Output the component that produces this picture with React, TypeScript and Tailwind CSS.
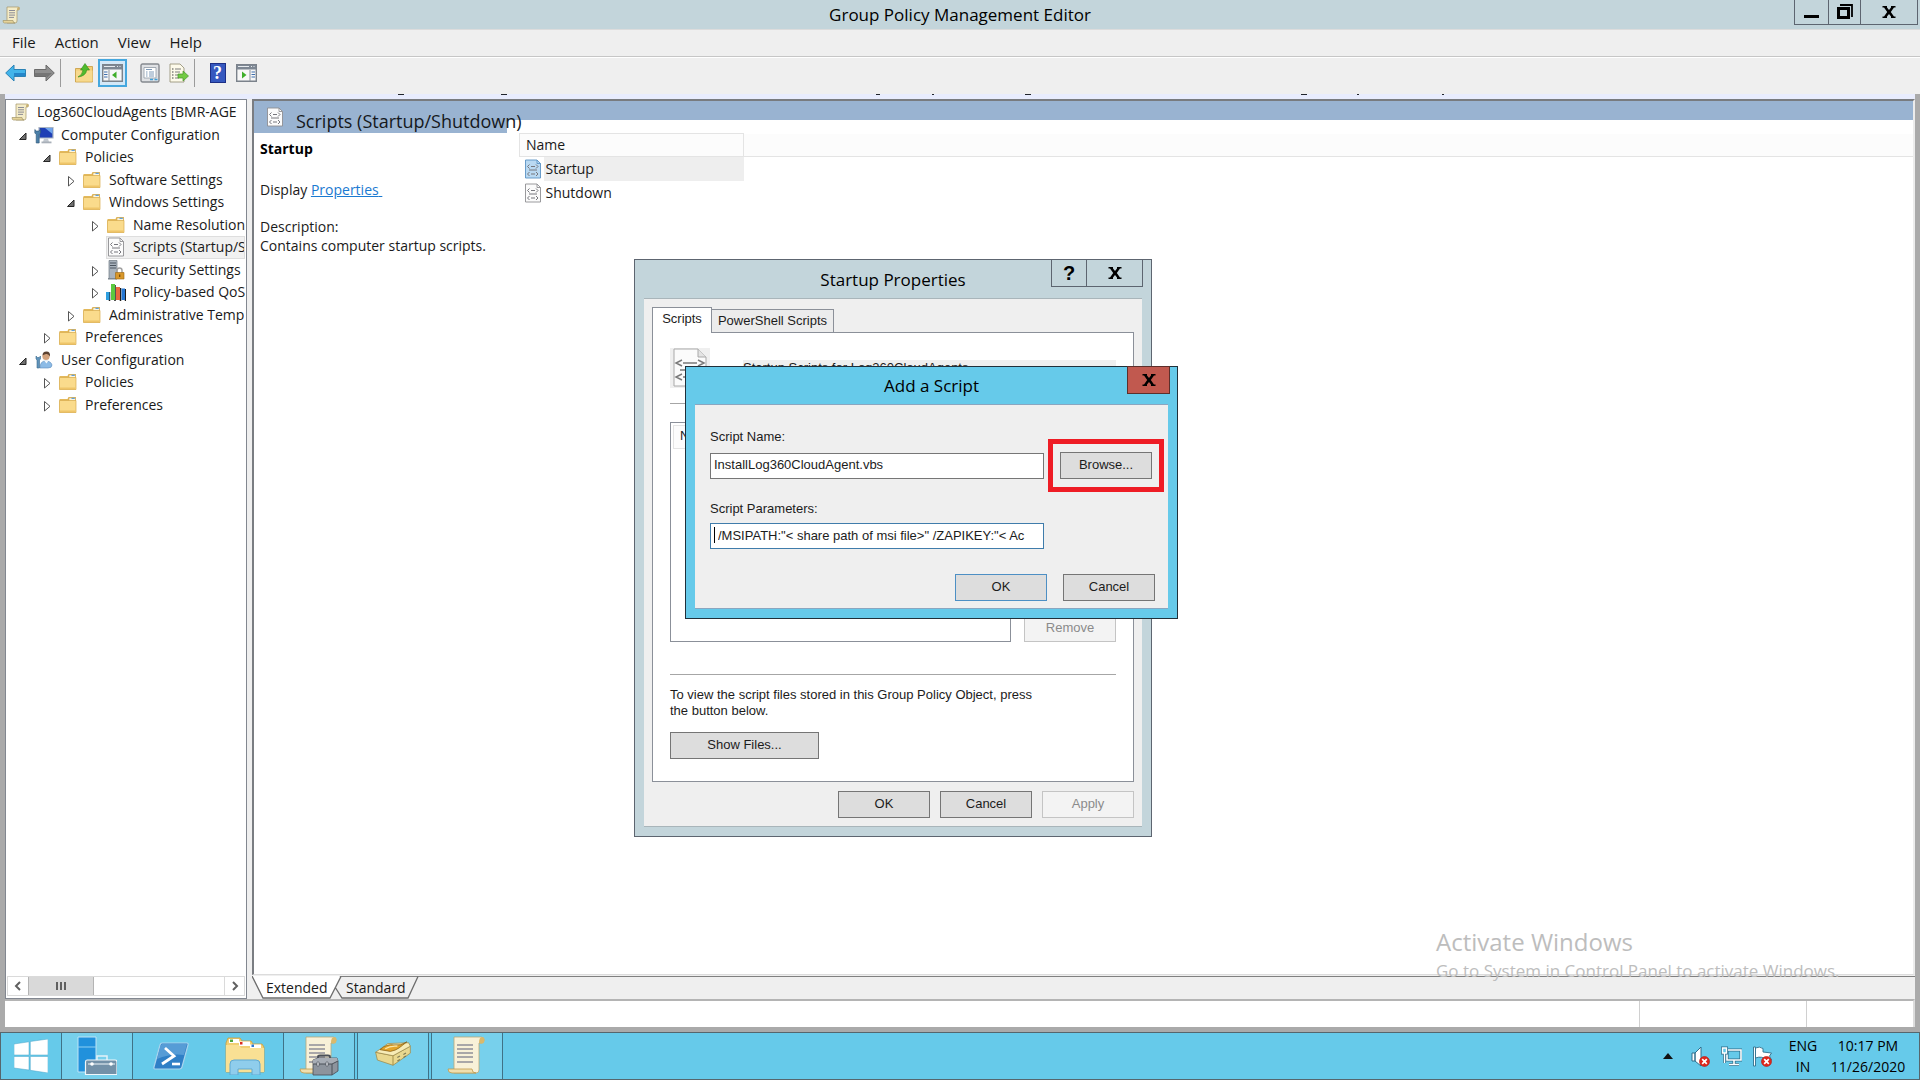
import type { ReactNode } from "react";

type IconName = "scroll" | "computer" | "folder" | "script" | "security" | "qos" | "user";

interface TreeNode {
  label: string;
  level: number;
  icon: IconName;
  state?: "open" | "closed";
  selected?: boolean;
}

const tree: TreeNode[] = [
  { label: "Log360CloudAgents [BMR-AGE", level: 0, icon: "scroll" },
  { label: "Computer Configuration", level: 1, icon: "computer", state: "open" },
  { label: "Policies", level: 2, icon: "folder", state: "open" },
  { label: "Software Settings", level: 3, icon: "folder", state: "closed" },
  { label: "Windows Settings", level: 3, icon: "folder", state: "open" },
  { label: "Name Resolution", level: 4, icon: "folder", state: "closed" },
  { label: "Scripts (Startup/S", level: 4, icon: "script", selected: true },
  { label: "Security Settings", level: 4, icon: "security", state: "closed" },
  { label: "Policy-based QoS", level: 4, icon: "qos", state: "closed" },
  { label: "Administrative Temp", level: 3, icon: "folder", state: "closed" },
  { label: "Preferences", level: 2, icon: "folder", state: "closed" },
  { label: "User Configuration", level: 1, icon: "user", state: "open" },
  { label: "Policies", level: 2, icon: "folder", state: "closed" },
  { label: "Preferences", level: 2, icon: "folder", state: "closed" },
];

const indent = ["pl-1", "pl-2", "pl-8", "pl-14", "pl-20"];

/* ---------- small icons ---------- */

function ScrollIcon({ className = "size-[18px]" }: { className?: string }) {
  return (
    <svg viewBox="0 0 18 18" className={className}>
      <path d="M5 1h11q1.500 0 1.500 1.500T16 4h-1v11q0 2-2 2H5z" fill="#f4ecc8" stroke="#a39668" strokeWidth=".7" />
      <path d="M15 4q0-3 1.500-3T17.500 3 16 4z" fill="#c9b070" />
      <path d="M1 14.500h10q0 2.500 2 2.500H2.500Q1 17 1 14.500z" fill="#e6d49a" stroke="#a39668" strokeWidth=".7" />
      <path d="M7 4.500h6M7 6.800h6M7 9.100h6M7 11.400h5" stroke="#8c8c96" strokeWidth="1" />
    </svg>
  );
}

function FolderIcon() {
  return (
    <svg viewBox="0 0 18 18" className="size-[18px]">
      <path d="M.5 3h8l1-2h7.500v15.500H.5z" fill="#e3b95c" />
      <path d="M10 1.800h6.500V5H10z" fill="#fdf6df" stroke="#c79b3c" strokeWidth=".5" />
      <path d="M12.500 2.300h3.300" stroke="#3f8fe0" strokeWidth="1" />
      <path d="M.5 4.500h16.500v12H.5z" fill="#fadb8c" stroke="#d9ac4e" strokeWidth=".7" />
      <path d="M1 14.500h15.500v1.600H1z" fill="#efc569" />
    </svg>
  );
}

function ScriptIcon({ tint = "#fbfbfb", line = "#8e8e92" }: { tint?: string; line?: string }) {
  return (
    <svg viewBox="0 0 18 20" className="h-5 w-[18px] shrink-0">
      <path d="M1.500 1h11.500l3.500 3.500V19h-15z" fill={tint} stroke={line} strokeWidth=".9" />
      <path d="M13 1v3.500h3.500" fill="none" stroke={line} strokeWidth=".9" />
      <path
        d="M5.500 5.500L3.500 7.500l2 2M12 5.500l2 2-2 2M7 7.500h4M5 11h8M5.500 13l-2 2 2 2M12 13l2 2-2 2M7 15h4"
        fill="none"
        stroke="#77777d"
        strokeWidth="1"
      />
    </svg>
  );
}

function ComputerIcon() {
  return (
    <svg viewBox="0 0 20 18" className="h-[18px] w-5">
      <path d="M5 1.500h14v10.500H5z" fill="#1f3fb5" stroke="#a9b4c2" strokeWidth="1.200" />
      <path d="M11 2h7.500v6z" fill="#6fa4ec" />
      <path d="M10 12.500h4l1 3.500h-6z" fill="#c3c9d1" />
      <path d="M7.500 15.500h10v1.800h-10z" fill="#a9b0b9" />
      <path d="M.8 3.500v3.500l1.400 1.400V17h3V8.400L6.600 7V3.500L5 5H2.400z" fill="#4b7fa8" stroke="#2e5673" strokeWidth=".6" />
    </svg>
  );
}

function SecurityIcon() {
  return (
    <svg viewBox="0 0 18 20" className="h-5 w-[18px]">
      <path d="M2 .5h8v18H2z" fill="#a9b3bd" stroke="#6f7983" strokeWidth=".7" />
      <path d="M3 3h6M3 5.500h6M3 8h6" stroke="#4a545e" strokeWidth="1" />
      <path d="M1 18h9v1.500H1z" fill="#7d8791" />
      <path d="M10 13v-2.500q0-2.500 2.500-2.500t2.500 2.500V13" fill="none" stroke="#a2a2a2" strokeWidth="1.500" />
      <path d="M8.500 12.500h8.500v6.500H8.500z" fill="#d8972a" stroke="#9b6510" strokeWidth=".6" />
      <path d="M12.700 14.500v2.500" stroke="#6e4508" strokeWidth="1.200" />
    </svg>
  );
}

function QosIcon() {
  return (
    <svg viewBox="0 0 20 18" className="h-[18px] w-5">
      <path d="M3.500 9v9M9 2v16M14.500 5v13M19.500 6v12" stroke="#1b1b1b" strokeWidth="1.500" />
      <path d="M0 9h3.500v8H0z" fill="#2f9fe0" />
      <path d="M5 1h4v16H5z" fill="#5cc93f" />
      <path d="M10 4h4v13h-4z" fill="#e8693f" />
      <path d="M15.500 5.500h3.500v11.500h-3.500z" fill="#2476d2" />
    </svg>
  );
}

function UserIcon() {
  return (
    <svg viewBox="0 0 18 18" className="size-[18px]">
      <path d="M5 17q0-7 5.500-7T17 14q0 3-4 3z" fill="#8dbbe6" stroke="#5a8cbc" strokeWidth=".6" />
      <path d="M9 9.500l2.500 3 2-3z" fill="#f4f7fa" />
      <circle cx="11" cy="5.500" r="3.600" fill="#d3a27c" />
      <path d="M7.500 4.500q0-4 4-4t3.500 5q-1.500-3-4-2.500T7.500 4.500z" fill="#5b4130" />
      <path d="M1 5v3l1 1v8h2.500V9l1-1V5L4 6.500H2.500z" fill="#5f93bb" stroke="#3d6c8f" strokeWidth=".6" />
    </svg>
  );
}

function TreeIcon({ name }: { name: IconName }) {
  switch (name) {
    case "scroll":
      return <ScrollIcon />;
    case "computer":
      return <ComputerIcon />;
    case "script":
      return <ScriptIcon />;
    case "security":
      return <SecurityIcon />;
    case "qos":
      return <QosIcon />;
    case "user":
      return <UserIcon />;
    default:
      return <FolderIcon />;
  }
}

function Expander({ state }: { state?: "open" | "closed" }) {
  return (
    <svg viewBox="0 0 16 16" className="size-4 shrink-0">
      {state === "open" && <path d="M12 6v6.500H5.500z" fill="#707070" stroke="#262626" strokeWidth="1" />}
      {state === "closed" && <path d="M6.500 4.500v9.500l5.500-4.700z" fill="#fff" stroke="#555" strokeWidth="1" />}
    </svg>
  );
}

function CloseGlyph() {
  return (
    <svg viewBox="0 0 14 12" className="h-3 w-3.5">
      <path d="M.5 0h4.500v1.500L7 4l2-2.500V0h4.500v1.500H12L8.800 6l3.200 4.500h1.500V12H9v-1.500L7 8l-2 2.500V12H.5v-1.500H2L5.200 6 2 1.500H.5z" fill="#000" />
    </svg>
  );
}

/* ---------- toolbar ---------- */

function ToolButton({ label, active, children }: { label: string; active?: boolean; children: ReactNode }) {
  return (
    <button
      aria-label={label}
      className={`flex h-7 w-[29px] items-center justify-center ${active ? "border-2 border-[#45a7de] bg-[#d3e8f8]" : ""}`}
    >
      {children}
    </button>
  );
}

function PaneIcon({ flip }: { flip?: boolean }) {
  return (
    <svg viewBox="0 0 21 18" className="h-[18px] w-[21px] shrink-0">
      <path d="M.7.700h19.600v16.600H.7z" fill="#f7f7f7" stroke="#7b828b" strokeWidth="1.400" />
      <path d="M1 1h19v4.500H1z" fill="#7d8793" />
      <path d="M2 2.500h11M15 2.500h1M17.500 2.500h1" stroke="#e7ebef" strokeWidth="1.200" />
      {flip ? (
        <>
          <path d="M14 6v11" stroke="#8b929b" />
          <path d="M15.500 8h3.500M15.500 10.500h3.500M15.500 13h3.500" stroke="#3f6fae" strokeWidth="1.200" />
          <path d="M6 7.500v7l4.500-3.500z" fill="#3fae2a" />
        </>
      ) : (
        <>
          <path d="M7 6v11" stroke="#8b929b" />
          <path d="M2 8h3.500M2 10.500h3.500M2 13h3.500" stroke="#3f6fae" strokeWidth="1.200" />
          <path d="M14.500 7.500v7L10 11z" fill="#3fae2a" />
        </>
      )}
    </svg>
  );
}

function Toolbar() {
  return (
    <div className="flex h-[37px] shrink-0 items-start border-t border-white bg-[#efefef] pt-px pl-px">
      <ToolButton label="Back">
        <svg viewBox="0 0 21 18" className="h-[18px] w-[21px]">
          <path d="M9 1v4.500h11.500v7H9V17L.700 9z" fill="#42b4ea" stroke="#2b82b5" strokeWidth="1" />
          <path d="M9 9h11v3H9z" fill="#2586c9" />
        </svg>
      </ToolButton>
      <ToolButton label="Forward">
        <svg viewBox="0 0 21 18" className="h-[18px] w-[21px]">
          <path d="M12 1v4.500H.5v7H12V17l8.300-8z" fill="#8f8f8f" stroke="#6b6b6b" strokeWidth="1" />
          <path d="M1 9h17l-5.500 5V12H1z" fill="#757575" />
        </svg>
      </ToolButton>
      <div className="ml-px h-7 w-px bg-[#9b9b9b]" />
      <div className="ml-2 flex">
        <ToolButton label="Up one level">
          <svg viewBox="0 0 18 20" className="h-5 w-[18px]">
            <path d="M.5 5.500h9l1-2h7v15.500H.5z" fill="#f3ce78" stroke="#c79a3d" strokeWidth=".8" />
            <path d="M1 7.500h16.500v11H1z" fill="#f7d98d" />
            <path d="M3 14q4.500-2 5-7H5.500L10 .5l4.500 6.500h-2.800Q11 13 3 14z" fill="#4fbb2e" stroke="#338a1b" strokeWidth=".6" />
          </svg>
        </ToolButton>
        <ToolButton label="Show or hide console tree" active>
          <PaneIcon />
        </ToolButton>
      </div>
      <div className="ml-2 flex">
        <ToolButton label="Properties">
          <svg viewBox="0 0 20 20" className="size-5">
            <rect x="1" y="1" width="18" height="18" rx="1.500" fill="#dfe1e4" stroke="#85898f" strokeWidth="1.400" />
            <path d="M4 4.500h12v10.500H4z" fill="#fff" stroke="#8f99a5" strokeWidth=".8" />
            <path d="M6 6.500h6M6 9h1.500M9 9h5M6 11h1.500M9 11h5M6 13h1.500M9 13h5" stroke="#6f8fb0" strokeWidth=".9" />
            <path d="M10 16.500h3M14.500 16.500h3" stroke="#3f9fd8" strokeWidth="1.600" />
          </svg>
        </ToolButton>
        <ToolButton label="Export list">
          <svg viewBox="0 0 20 20" className="size-5">
            <path d="M1 1h10l4 4v14H1z" fill="#fdfaea" stroke="#9a957d" strokeWidth=".9" />
            <path d="M3 6h1.500M3 9h1.500M3 12h1.500M3 15h1.500" stroke="#444" strokeWidth="1.200" />
            <path d="M6 6h6M6 9h5M6 12h4M6 15h4" stroke="#7d7d7d" strokeWidth="1" />
            <path d="M9 11h5V8l5.500 5-5.500 5v-3H9z" fill="#72ca43" stroke="#45962a" strokeWidth=".7" />
          </svg>
        </ToolButton>
      </div>
      <div className="ml-px h-7 w-px bg-[#9b9b9b]" />
      <div className="ml-2 flex">
        <ToolButton label="Help">
          <span className="flex h-5 w-4 items-center justify-center border border-[#1c2f86] bg-[#3558bf] font-['Liberation_Serif',serif] text-lg leading-4 font-bold text-white">
            ?
          </span>
        </ToolButton>
        <ToolButton label="Show or hide action pane">
          <PaneIcon flip />
        </ToolButton>
      </div>
    </div>
  );
}

/* ---------- panes ---------- */

function TreePane() {
  return (
    <nav className="flex w-[242px] shrink-0 flex-col border border-[#828790] bg-white">
      <ul role="tree" className="mt-px grid h-[315px] auto-rows-fr overflow-hidden pr-px">
        {tree.map((node, i) => (
          <li
            key={i}
            role="treeitem"
            aria-selected={!!node.selected}
            className={`flex min-w-0 items-center overflow-hidden whitespace-nowrap ${indent[node.level]}`}
          >
            {node.level > 0 && <Expander state={node.state} />}
            <span
              className={`flex h-full min-w-0 flex-1 items-center gap-[7px] ${node.level > 0 ? "ml-1" : ""} ${
                node.selected ? "bg-[#f1f1f1] outline -outline-offset-1 outline-[#dedede]" : ""
              }`}
            >
              <span className="flex w-5 shrink-0 justify-center">
                <TreeIcon name={node.icon} />
              </span>
              <span className="min-w-0 overflow-hidden">{node.label}</span>
            </span>
          </li>
        ))}
      </ul>
      <div className="mx-px mt-auto mb-0.5 flex h-5 border border-[#dadada] bg-white">
        <button aria-label="Scroll left" className="flex w-5 items-center justify-center">
          <svg viewBox="0 0 8 10" className="h-2.5 w-2">
            <path d="M6 1L2 5l4 4" fill="none" stroke="#606060" strokeWidth="2" />
          </svg>
        </button>
        <div className="flex w-[66px] items-center justify-center gap-0.5 border-x border-[#b4b4b4] bg-[#d9d9d9]">
          <i className="h-2 w-0.5 bg-[#606060]" />
          <i className="h-2 w-0.5 bg-[#606060]" />
          <i className="h-2 w-0.5 bg-[#606060]" />
        </div>
        <div className="flex-1" />
        <button aria-label="Scroll right" className="flex w-5 items-center justify-center border-l border-[#dadada]">
          <svg viewBox="0 0 8 10" className="h-2.5 w-2">
            <path d="M2 1l4 4-4 4" fill="none" stroke="#606060" strokeWidth="2" />
          </svg>
        </button>
      </div>
    </nav>
  );
}

function DetailPane() {
  return (
    <section className="flex min-w-0 flex-1 flex-col">
      <div className="flex flex-1 border-t-2 border-r-2 border-b border-l-2 border-t-[#787b7f] border-r-[#ececec] border-b-[#dcdcdc] border-l-[#7a7d82] bg-white">
        <aside className="w-[253px] shrink-0">
          <h2 className="relative z-10 flex h-8 items-center gap-3 bg-[#99b3d1] pl-3 text-lg whitespace-nowrap text-[#15181c]">
            <ScriptIcon />
            <span className="pt-2">Scripts (Startup/Shutdown)</span>
          </h2>
          <div className="pt-1.5 pl-1.5 leading-[19px] whitespace-nowrap">
            <p className="font-bold text-black">Startup</p>
            <p className="mt-[22px]">
              Display{" "}
              <a href="#properties" className="text-[#1b7ad1] underline">
                Properties{"\u00a0"}
              </a>
            </p>
            <p className="mt-[18px]">Description:</p>
            <p>Contains computer startup scripts.</p>
          </div>
        </aside>
        <div className="min-w-0 flex-1">
          <div className="h-[19px] bg-[#99b3d1]" />
          <table className="mt-[13px] ml-3 w-[calc(100%-12px)] table-fixed border-collapse text-left">
            <thead>
              <tr className="h-[23px] border-b border-[#e4e4e4] bg-[#fcfcfc]">
                <th className="w-[224px] border border-[#e4e4e4] pl-1.5 font-normal">Name</th>
                <th aria-label="Empty" />
              </tr>
            </thead>
            <tbody>
              <tr className="h-6">
                <td className="p-0">
                  <div className="flex items-center pl-1">
                    <ScriptIcon tint="#b9d9f2" line="#5b93c4" />
                    <span className="ml-0.5 h-6 flex-1 bg-[#eeeeee] pl-0.5 leading-6">Startup</span>
                  </div>
                </td>
                <td />
              </tr>
              <tr className="h-6">
                <td className="p-0">
                  <div className="flex items-center pl-1">
                    <ScriptIcon />
                    <span className="ml-0.5 h-6 flex-1 pl-0.5 leading-6">Shutdown</span>
                  </div>
                </td>
                <td />
              </tr>
            </tbody>
          </table>
        </div>
      </div>
      <div className="relative mt-px flex h-[23px] items-center border-t border-[#808080] bg-[#efefef] pl-3.5">
        <svg viewBox="0 0 168 23" className="absolute -top-px left-0 h-[23px] w-[168px]">
          <path d="M0 0h88L78 22H11z" fill="#fff" />
          <path d="M0 0l11 22h67L89 .5M83 11l7 11h66l10-21.500" fill="none" stroke="#6d6d6d" strokeWidth="1.300" />
        </svg>
        <button className="relative w-[66px] text-left">Extended</button>
        <button className="relative ml-3.5 w-[66px] text-left">Standard</button>
      </div>
    </section>
  );
}

/* ---------- dialogs ---------- */

function DialogButton({
  children,
  wide,
  focus,
  disabled,
}: {
  children: ReactNode;
  wide?: boolean;
  focus?: boolean;
  disabled?: boolean;
}) {
  const tone = disabled
    ? "border-[#c4c4c4] bg-[#f3f3f3] text-[#8b8b8b]"
    : focus
      ? "border-[#4d8fc4] bg-[#dddddd]"
      : "border-[#757575] bg-[#dddddd]";
  return (
    <button
      type="button"
      disabled={disabled}
      className={`h-[27px] shrink-0 border ${wide ? "w-[149px]" : "w-[92px]"} ${tone}`}
    >
      {children}
    </button>
  );
}

function StartupDialog() {
  return (
    <div
      role="dialog"
      aria-label="Startup Properties"
      className="absolute top-[259px] left-[634px] flex h-[578px] w-[518px] flex-col border border-[#5d6570] bg-[#c3d5db] px-[9px] pb-[9px] font-['Liberation_Sans',sans-serif] text-[13px] text-[#1c1c1c]"
    >
      <header className="relative flex h-[38px] shrink-0 items-center justify-center pt-0.5 font-['Open_Sans',sans-serif] text-[17px] text-black">
        Startup Properties
        <div className="absolute top-[-1px] right-[-1px] flex h-7 border border-[#5d6570]">
          <button aria-label="Help" className="w-[34px] font-['Liberation_Sans',sans-serif] text-xl leading-6 font-bold">
            ?
          </button>
          <button aria-label="Close" className="flex w-[56px] items-center justify-center border-l border-[#5d6570]">
            <CloseGlyph />
          </button>
        </div>
      </header>
      <div className="flex flex-1 flex-col border-t border-b border-[#a9b5ba] bg-[#efefef] px-2 pt-2">
        <div role="tablist" className="relative z-10 flex items-end">
          <button role="tab" aria-selected="true" className="-mb-px h-[26px] w-[60px] border border-b-0 border-[#8b9099] bg-white pb-0.5">
            Scripts
          </button>
          <button role="tab" aria-selected="false" className="h-[23px] w-[122px] border border-b-0 border-l-0 border-[#8b9099] bg-[#ececec]">
            PowerShell Scripts
          </button>
        </div>
        <div className="flex h-[450px] shrink-0 flex-col border border-[#8b9099] bg-white px-[17px] pt-[15px]">
          <div className="flex h-10 gap-[33px]">
            <svg viewBox="0 0 40 40" className="size-10 bg-[#efefef]">
              <path d="M4 1h24l8 8v29H4z" fill="#fbfbfb" stroke="#a9a9a9" />
              <path d="M28 1v8h8" fill="#e3e3e3" stroke="#a9a9a9" />
              <path d="M12 12l-6 3 6 3M28 12l6 3-6 3M13 15h14M10 22h18M12 26l-6 3 6 3M13 29h14" fill="none" stroke="#7a7a7a" strokeWidth="1.500" />
            </svg>
            <p className="mt-3 h-4 flex-1 bg-[#efefef] leading-4">Startup Scripts for Log360CloudAgents</p>
          </div>
          <hr className="mt-[15px] border-[#a6a6a6]" />
          <div className="mt-[18px] flex items-end justify-between">
            <div className="h-[220px] w-[341px] border border-[#8b9099] bg-white p-0.5">
              <div className="h-6 border border-[#e4e4e4] bg-[#fcfcfc] pl-1.5 leading-5">Name</div>
            </div>
            <DialogButton disabled>Remove</DialogButton>
          </div>
          <hr className="mt-8 border-[#a6a6a6]" />
          <p className="mt-3 mb-[13px] w-[380px] leading-4">
            To view the script files stored in this Group Policy Object, press
            <br />
            the button below.
          </p>
          <DialogButton wide>Show Files...</DialogButton>
        </div>
        <div className="mt-[9px] flex justify-end gap-2.5">
          <DialogButton>OK</DialogButton>
          <DialogButton>Cancel</DialogButton>
          <DialogButton disabled>Apply</DialogButton>
        </div>
      </div>
    </div>
  );
}

function AddScriptDialog() {
  return (
    <div
      role="dialog"
      aria-label="Add a Script"
      className="absolute top-[366px] left-[685px] flex h-[253px] w-[493px] flex-col border border-[#20303a] bg-[#66caea] px-[9px] pb-[9px] font-['Liberation_Sans',sans-serif] text-[13px] text-[#1c1c1c]"
    >
      <header className="relative flex h-[37px] shrink-0 items-center justify-center pt-0.5 font-['Open_Sans',sans-serif] text-[17px] text-black">
        Add a Script
        <button
          aria-label="Close"
          className="absolute top-[-1px] right-[-2px] flex h-7 w-[43px] items-center justify-center border border-[#5c2f2b] bg-[#c1594f]"
        >
          <CloseGlyph />
        </button>
      </header>
      <form className="flex flex-1 flex-col border-t border-b border-[#8aa6c0] bg-[#efefef] pt-6 pl-[15px]">
        <label htmlFor="script-name" className="leading-4">
          Script Name:
        </label>
        <div className="mt-1.5 flex items-center">
          <input
            id="script-name"
            defaultValue="InstallLog360CloudAgent.vbs"
            className="h-[26px] w-[334px] shrink-0 border border-[#767676] bg-white px-[3px] pb-0.5"
          />
          {/* highlighted step */}
          <div className="-my-3 ml-1 border-[5px] border-[#ee1c25] px-[7px] py-2">
            <DialogButton>Browse...</DialogButton>
          </div>
        </div>
        <label htmlFor="script-params" className="mt-[21px] leading-4">
          Script Parameters:
        </label>
        <div className="relative mt-1.5 w-[334px]">
          <input
            id="script-params"
            defaultValue={'/MSIPATH:"< share path of msi file>" /ZAPIKEY:"< Ac'}
            className="h-[26px] w-full border border-[#3f7cab] bg-white pr-[3px] pb-0.5 pl-[7px]"
          />
          <i className="absolute top-1 left-1 h-4 w-px bg-black" />
        </div>
        <div className="mt-[25px] flex justify-end gap-4 pr-[13px]">
          <DialogButton focus>OK</DialogButton>
          <DialogButton>Cancel</DialogButton>
        </div>
      </form>
    </div>
  );
}

/* ---------- taskbar ---------- */

function TaskButton({ label, open, children }: { label: string; open?: boolean; children: ReactNode }) {
  return (
    <button
      aria-label={label}
      className={`mr-0.5 flex h-full w-[72px] items-center justify-center ${open ? "border-x border-[#3f7287] bg-[#77d0ec]" : ""}`}
    >
      {children}
    </button>
  );
}

function BigScroll({ toolbox }: { toolbox?: boolean }) {
  return (
    <svg viewBox="0 0 40 40" className="size-10">
      <path d="M7 1h27q3 0 3 3t-3 3h-2v27q0 3-3 3H7z" fill="#f8f1d8" stroke="#b7a878" strokeWidth=".8" />
      <path d="M32 7q0-6 3-6t2.500 4-5.500 2z" fill="#d9b96c" />
      <path d="M1 33h24q0 4 4 4H5q-4 0-4-4z" fill="#f0dfae" stroke="#c09a4c" strokeWidth=".8" />
      <path d="M10 9h16M10 13h16M10 17h16M10 21h16M10 26h16" stroke="#8f8f98" strokeWidth="1.300" />
      {toolbox && (
        <g>
          <path d="M19 23v-2q0-1.500 2-1.500h8q2 0 2 1.500v2" fill="none" stroke="#4b5058" strokeWidth="1.800" />
          <path d="M14 24l5-2h19l1 3v10l-6 4H14z" fill="#8d949d" stroke="#484d55" strokeWidth=".8" />
          <path d="M14 24l5-2h19l1 3-6 3H14z" fill="#a7adb5" />
          <path d="M14 28h19l6-3M33 28v11" fill="none" stroke="#4b5058" />
          <path d="M18 26h2v4h-2zM27 26h2v4h-2z" fill="#dde1e6" stroke="#3b3f45" strokeWidth=".5" />
        </g>
      )}
    </svg>
  );
}

function ErrorBadge({ x }: { x: number }) {
  return (
    <g>
      <circle cx={x} cy="15.500" r="5" fill="#e0271c" stroke="#b5170f" strokeWidth=".6" />
      <path d={`M${x - 2.3} 13.200l4.600 4.600M${x + 2.3} 13.200l-4.600 4.600`} stroke="#fff" strokeWidth="1.700" />
    </g>
  );
}

function Taskbar() {
  return (
    <footer className="flex h-12 shrink-0 items-center border border-[#56666d] bg-[#66caea] font-['Open_Sans',sans-serif]">
      <button aria-label="Start" className="flex h-full w-[60px] items-center justify-center">
        <svg viewBox="0 0 34 34" className="size-[34px]">
          <path d="M0 5l15-2.200V16H0zM16.300 2.500L34 0v16H16.300zM0 17.500h15V31L0 29zM16.300 17.500H34V34l-17.700-2.700z" fill="#fff" stroke="#4ba5c8" strokeWidth=".5" />
        </svg>
      </button>
      <TaskButton label="Server Manager" open>
        <svg viewBox="0 0 40 40" className="size-10">
          <path d="M1 1h18v35H1z" fill="#2191dc" stroke="#bfe4f6" strokeWidth="1" />
          <path d="M1 11h18" stroke="#8fd0f2" strokeWidth="1" />
          <path d="M20 24v-4h10v4" fill="none" stroke="#e4f1f8" strokeWidth="1.500" />
          <path d="M10 24h28q2 0 2 2v12.500H8.500V26q0-2 1.500-2z" fill="#7391a8" stroke="#f1f7fa" strokeWidth="1.200" />
          <path d="M11 28h27" stroke="#f1f7fa" />
          <circle cx="15" cy="28" r="1.800" fill="#fff" />
          <circle cx="34" cy="28" r="1.800" fill="#fff" />
        </svg>
      </TaskButton>
      <TaskButton label="Windows PowerShell">
        <svg viewBox="0 0 36 28" className="h-7 w-9">
          <path d="M9 1h25q1.500 0 1 2l-6 22q-.5 2-2.500 2H2q-1.500 0-1-2L7 3q.5-2 2-2z" fill="#2f7fc6" stroke="#a9d4ee" strokeWidth="1.200" />
          <path d="M9 2h25l-3 11Q18 11 4 17L7.500 3.500z" fill="#66a8dd" opacity=".7" />
          <path d="M12 6l9 8-12 8" fill="none" stroke="#fff" strokeWidth="2.800" />
          <path d="M19 22h8" stroke="#fff" strokeWidth="2.600" />
        </svg>
      </TaskButton>
      <TaskButton label="File Explorer">
        <svg viewBox="0 0 40 38" className="h-[38px] w-10">
          <path d="M1 6l2-5h12l2 3h9l2 3h9l2 3v25H1z" fill="#f1cf72" stroke="#c99d3f" strokeWidth=".8" />
          <path d="M4 2h10v4H4zM14 4.500h11V9H14zM25 7.500h11V12H25z" fill="#fff" />
          <path d="M5 2.500h3V5H5z" fill="#4fa63a" />
          <path d="M15 5h2.500v2.500H15z" fill="#dc2c22" />
          <path d="M26.500 7.500H29V10h-2.500z" fill="#2c78d0" />
          <path d="M1 8h13l2 3h23v24H1z" fill="#f9e094" />
          <path d="M5 38V27q0-4 4-4h22q4 0 4 4v11h-8v-6H13v6z" fill="#8fcdec" stroke="#5fa9d3" strokeWidth="1" />
        </svg>
      </TaskButton>
      <TaskButton label="Group Policy Management" open>
        <BigScroll toolbox />
      </TaskButton>
      <TaskButton label="Run" open>
        <svg viewBox="0 0 42 30" className="-mt-1 h-[26px] w-10">
          <path d="M1 13l20 4 20-11v8L21 28 3 22z" fill="#e9d88f" stroke="#9b8440" strokeWidth=".8" />
          <path d="M21 17v11" stroke="#9b8440" />
          <path d="M1 13L15 3l24-1 2 4-20 11z" fill="#f7ecb7" stroke="#9b8440" strokeWidth=".8" />
          <path d="M6 10q8-7 16-5.500T37 1q-5 4-9 7t-10 4z" fill="#e3a52b" stroke="#7c560f" strokeWidth=".8" />
          <path d="M12 9q6-4 14-3" fill="none" stroke="#fbe6a6" strokeWidth="1.400" />
          <path d="M26 19l3-1.700M33 15.500l3-1.700M26 23l3-1.700M33 19l3-1.700" stroke="#7e7a55" strokeWidth="1.300" />
        </svg>
      </TaskButton>
      <TaskButton label="Group Policy Management Editor" open>
        <BigScroll />
      </TaskButton>

      <div className="ml-auto flex items-center pr-3 text-black">
        <button aria-label="Show hidden icons" className="mr-[17px]">
          <svg viewBox="0 0 10 6" className="h-1.5 w-2.5">
            <path d="M5 0l5 6H0z" fill="#111" />
          </svg>
        </button>
        <div className="mr-3 flex gap-2.5">
          <svg viewBox="0 0 21 21" className="size-[21px]">
            <path d="M2 7h3v8H2zM5 7l6-6v19l-6-5z" fill="#fff" stroke="#2f6f8c" strokeWidth="1" />
            <ErrorBadge x={14.5} />
          </svg>
          <svg viewBox="0 0 21 21" className="size-[21px]">
            <path d="M6 4h14v10H6zM13 14v4M8 18.500h10" fill="none" stroke="#2f6f8c" strokeWidth="3.200" />
            <path d="M6 4h14v10H6zM13 14v4M8 18.500h10" fill="none" stroke="#fff" strokeWidth="1.600" />
            <path d="M1.500 2h4v5h-4zM3.500 7v10" fill="#66caea" stroke="#2f6f8c" strokeWidth="3" />
            <path d="M1.500 2h4v5h-4zM3.500 7v10" fill="#66caea" stroke="#fff" strokeWidth="1.400" />
          </svg>
          <svg viewBox="0 0 21 21" className="size-[21px]">
            <path d="M1.500 1h2v19h-2z" fill="#fff" stroke="#2f6f8c" strokeWidth=".9" />
            <path d="M3.500 2q4-2 7.500.5V6l8.500 1-2 3 2 4h-5Q10 9.500 3.500 12z" fill="#fff" stroke="#2f6f8c" strokeWidth=".9" />
            <ErrorBadge x={14.5} />
          </svg>
        </div>
        <div className="mr-2 w-9 text-center text-sm leading-[21px]">
          ENG
          <br />
          IN
        </div>
        <div className="w-[78px] text-center text-sm leading-[21px] whitespace-nowrap">
          10:17 PM
          <br />
          11/26/2020
        </div>
      </div>
    </footer>
  );
}

export default function App() {
  return (
    <div className="h-screen w-full bg-white pr-[5px] pb-[7px]">
      <div className="relative flex h-full flex-col overflow-hidden font-['Open_Sans',sans-serif] text-sm text-[#1a1a1a]">
        <header className="relative flex h-[29px] shrink-0 items-center justify-center bg-[#c3d5db] pt-0.5 text-[17px] text-black">
          <div className="absolute top-1.5 left-0.5">
            <ScrollIcon />
          </div>
          <h1>Group Policy Management Editor</h1>
          <div className="absolute -top-px right-0.5 flex h-[26px] border border-[#5d6570]">
            <button aria-label="Minimize" className="flex w-[33px] items-center justify-center pt-2">
              <i className="h-[3px] w-[15px] bg-black" />
            </button>
            <button aria-label="Restore" className="flex w-8 items-center justify-center border-l border-[#5d6570]">
              <svg viewBox="0 0 16 16" className="size-4">
                <path d="M1.500 4.500h10v9h-10z" fill="none" stroke="#000" strokeWidth="3" />
                <path d="M3 1h12v12" fill="none" stroke="#000" strokeWidth="1.800" />
              </svg>
            </button>
            <button aria-label="Close" className="flex w-[57px] items-center justify-center border-l border-[#5d6570]">
              <CloseGlyph />
            </button>
          </div>
        </header>

        <nav className="flex h-7 shrink-0 items-center gap-[19px] border-t border-b border-t-[#dcdcdc] border-b-[#c6c6c6] bg-[#efefef] pl-3 text-[15px]">
          <button>File</button>
          <button>Action</button>
          <button>View</button>
          <button>Help</button>
        </nav>
        <Toolbar />

        <div className="flex min-h-0 flex-1 flex-col bg-[#aaaaaa] px-[5px] pb-[5px]">
          <div className="relative h-[5px] shrink-0 bg-[#e8ecfd]">
            <svg viewBox="0 0 1100 2" className="absolute top-0 left-[390px] h-0.5 w-[1100px]">
              <path
                d="M3 .500h6M106 .500h6M481 .500h4M537 .500h2M630 .500h6M906 .500h6M962 .500h2M1047 .500h2"
                stroke="#20242c"
                strokeWidth="1"
              />
            </svg>
          </div>
          <main className="flex min-h-0 flex-1 gap-[5px] bg-[#efefef]">
            <TreePane />
            <DetailPane />
          </main>
          <div className="flex h-7 shrink-0 justify-end border-t-2 border-r-2 border-t-[#b4b4b4] border-r-[#dcdcdc] bg-white">
            <div className="w-[167px] border-l border-[#d0d0d0]" />
            <div className="w-[107px] border-l border-[#d0d0d0]" />
          </div>
        </div>
        <Taskbar />

        {/* activation watermark */}
        <div className="pointer-events-none absolute right-0 bottom-[96px] w-[484px] whitespace-nowrap text-[#bdbdbd]">
          <p className="text-2xl leading-8">Activate Windows</p>
          <p className="text-[17px] leading-[26px]">Go to System in Control Panel to activate Windows.</p>
        </div>

        <StartupDialog />
        <AddScriptDialog />
      </div>
    </div>
  );
}
